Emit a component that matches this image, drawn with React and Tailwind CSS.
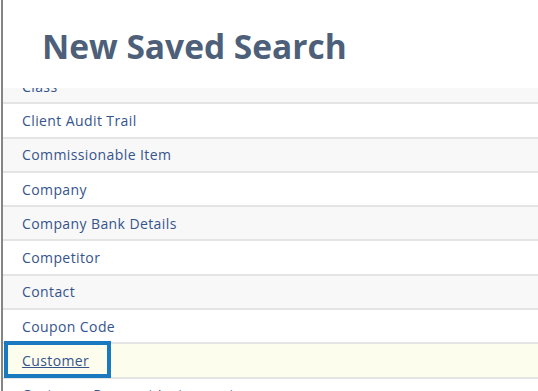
import React from "react";

const rows = [
  "Class",
  "Client Audit Trail",
  "Commissionable Item",
  "Company",
  "Company Bank Details",
  "Competitor",
  "Contact",
  "Coupon Code",
  "Customer",
  "Customer Payment Instrument",
];

const App = () => {
  return (
    <div
      className="w-[538px] h-[391px] overflow-hidden bg-white"
      style={{ fontFamily: '"Open Sans", "Liberation Sans", sans-serif' }}
    >
      <div className="ml-px h-full border-l-2 border-[#858585] flex flex-col">
        <h1 className="pt-[22px] pl-[39px] text-[33.5px] leading-[48px] font-bold text-[#4d5f79]">
          New Saved Search
        </h1>

        {/* record type list, scrolled so Class is cut off */}
        <div className="mt-[18px] flex-1 overflow-hidden">
          <div className="-mt-[18px]">
            {rows.map((name, i) => {
              const active = name === "Customer";
              const bg = active
                ? "bg-[#fdfdee]"
                : i % 2 === 0
                ? "bg-[#f8f8f8]"
                : "bg-white";
              return (
                <div
                  key={name}
                  className={`relative h-[34.3px] flex items-center pl-[19px] border-b-2 border-[#e4e4e4] ${bg}`}
                >
                  <a
                    href="#"
                    className={`text-[14px] tracking-[0.4px] text-[#35548c] ${
                      active ? "underline" : "no-underline"
                    }`}
                  >
                    {name}
                  </a>
                  {active && (
                    <div className="absolute left-[1px] -top-[3px] w-[107px] h-[37px] border-[4px] border-[#1a7abf]" />
                  )}
                </div>
              );
            })}
          </div>
        </div>
      </div>
    </div>
  );
};

export default App;
